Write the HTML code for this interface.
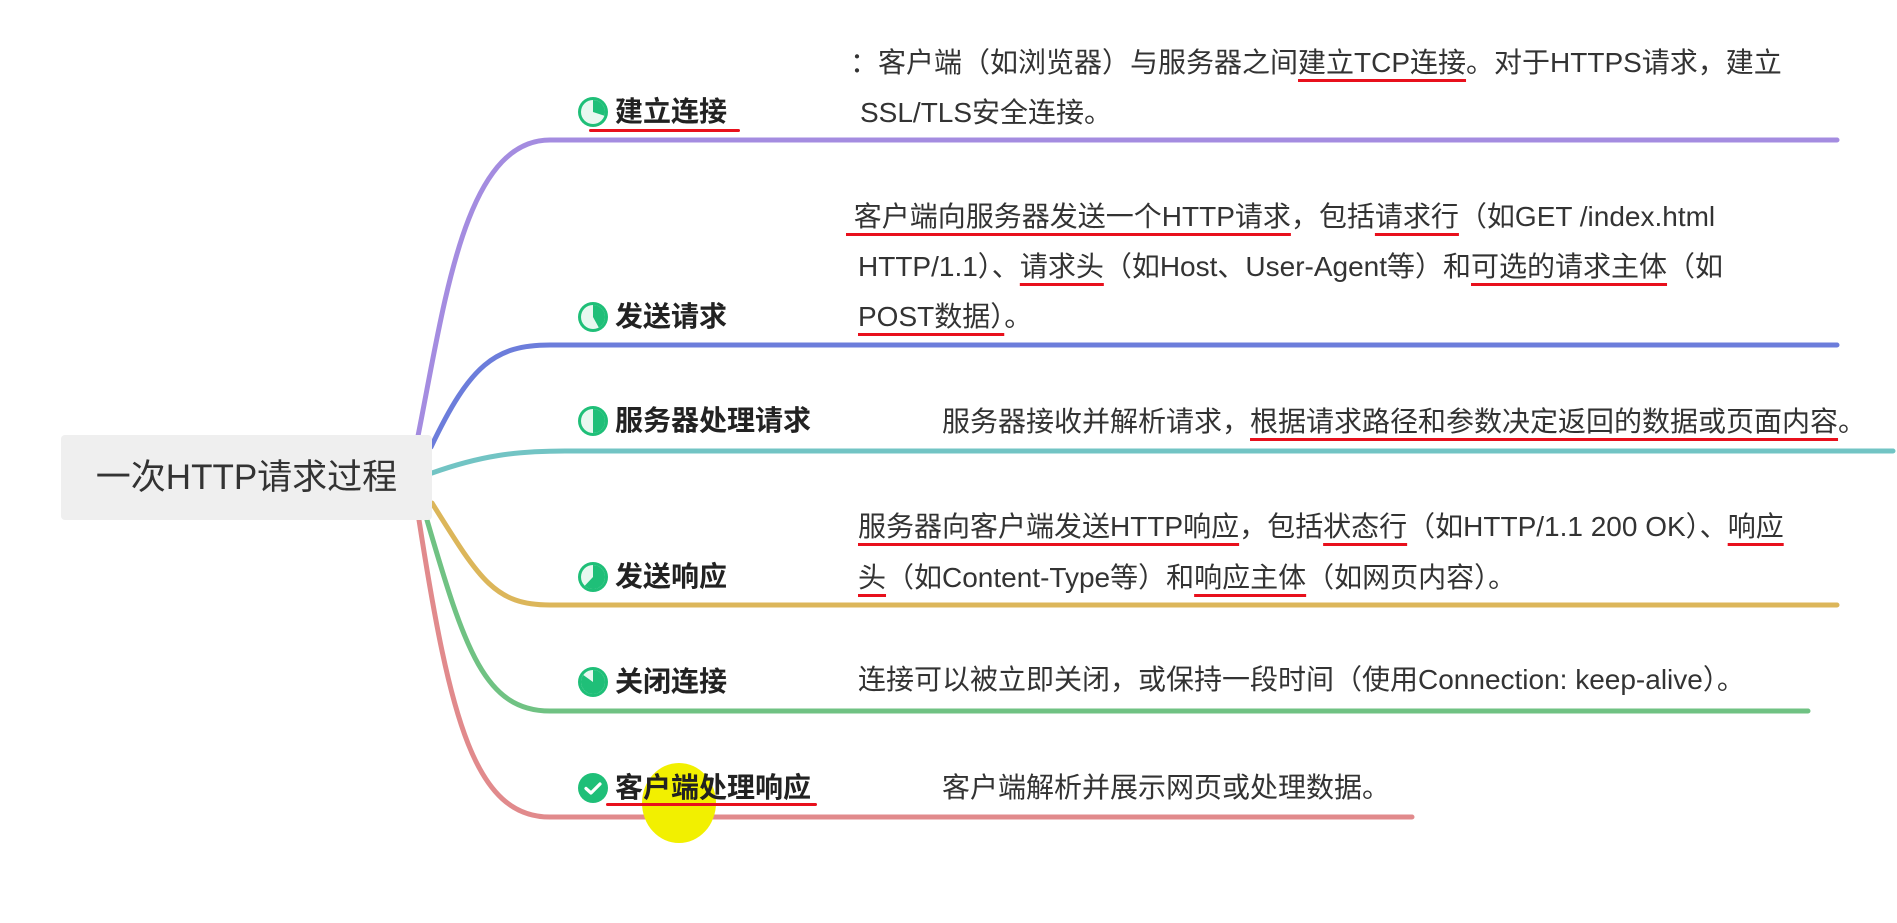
<!DOCTYPE html>
<html><head><meta charset="utf-8"><style>
html,body{margin:0;padding:0;background:#fff;}
body{width:1897px;height:923px;position:relative;overflow:hidden;font-family:"Liberation Sans","Noto Sans CJK SC",sans-serif;}
.root{position:absolute;left:61px;top:435px;width:371px;height:85px;background:#efefef;border-radius:4px;font-size:35px;color:#333;line-height:85px;text-align:center;}
.lab{position:absolute;left:615px;font-size:28px;font-weight:bold;color:#222;line-height:32px;white-space:nowrap;}
.ic{position:absolute;left:577px;width:32px;height:32px;}
.t{position:absolute;font-size:28px;color:#333;line-height:32px;white-space:nowrap;}
.t u{text-decoration:underline;text-decoration-color:#e8101c;text-decoration-thickness:3px;text-underline-offset:7px;}
.u{position:absolute;height:3px;background:#e8101c;border-radius:2px;}
</style></head><body>
<svg width="1897" height="923" style="position:absolute;left:0;top:0" fill="none" stroke-width="5" stroke-linecap="round">
<path d="M418,436 C445,300 465,140 550,140 L1837,140" stroke="#a48ce0"/>
<path d="M431,447 C470,365 495,345 550,345 L1837,345" stroke="#6c7ddb"/>
<path d="M432,473 C480,456 515,451 565,451 L1893,451" stroke="#72c4c4"/>
<path d="M432,503 C480,580 495,605 550,605 L1837,605" stroke="#dcb65a"/>
<path d="M427,520 C465,650 485,711 550,711 L1808,711" stroke="#70c283"/>
<path d="M419,520 C450,720 475,817 550,817 L1412,817" stroke="#e18a8c"/>
</svg>
<div class="root">一次HTTP请求过程</div>

<svg class="ic" style="top:96px" viewBox="0 0 32 32"><circle cx="16" cy="16" r="15" fill="#1fbf78"/><circle cx="16" cy="16" r="12" fill="#e9f8f0"/><path d="M16,16 L16,4 A12,12 0 0 1 27.41,19.71Z" fill="#1fbf78"/></svg>
<div class="lab" style="top:96px">建立连接</div>
<div class="u" style="left:589px;top:129px;width:151px"></div>
<svg class="ic" style="top:301px" viewBox="0 0 32 32"><circle cx="16" cy="16" r="15" fill="#1fbf78"/><circle cx="16" cy="16" r="12" fill="#e9f8f0"/><path d="M16,16 L16,4 A12,12 0 0 1 21.78,26.51Z" fill="#1fbf78"/></svg>
<div class="lab" style="top:301px">发送请求</div>
<svg class="ic" style="top:405px" viewBox="0 0 32 32"><circle cx="16" cy="16" r="15" fill="#1fbf78"/><circle cx="16" cy="16" r="12" fill="#e9f8f0"/><path d="M16,16 L16,4 A12,12 0 0 1 16,28Z" fill="#1fbf78"/></svg>
<div class="lab" style="top:405px">服务器处理请求</div>
<svg class="ic" style="top:561px" viewBox="0 0 32 32"><circle cx="16" cy="16" r="15" fill="#1fbf78"/><circle cx="16" cy="16" r="12" fill="#e9f8f0"/><path d="M16,16 L16,4 A12,12 0 1 1 7.78,24.75Z" fill="#1fbf78"/></svg>
<div class="lab" style="top:561px">发送响应</div>
<svg class="ic" style="top:666px" viewBox="0 0 32 32"><circle cx="16" cy="16" r="15" fill="#1fbf78"/><circle cx="16" cy="16" r="12" fill="#e9f8f0"/><path d="M16,16 L16,4 A12,12 0 1 1 6.29,8.94Z" fill="#1fbf78"/></svg>
<div class="lab" style="top:666px">关闭连接</div>
<div style="position:absolute;left:642px;top:763px;width:74px;height:80px;border-radius:50%;background:#f2f000;"></div>
<svg class="ic" style="top:772px" viewBox="0 0 32 32"><circle cx="16" cy="16" r="15" fill="#1fbf78"/><path d="M9,16.5 L14,21 L23,12" stroke="#fff" stroke-width="3.2" fill="none" stroke-linecap="round" stroke-linejoin="round"/></svg>
<div class="lab" style="top:772px">客户端处理响应</div>
<div class="u" style="left:606px;top:803px;width:211px"></div>

<div class="t" style="left:850px;top:47px">：客户端（如浏览器）与服务器之间<u>建立TCP连接</u>。对于HTTPS请求，建立</div>
<div class="t" style="left:860px;top:97px">SSL/TLS安全连接。</div>
<div class="t" style="left:846px;top:201px"><u>&nbsp;客户端向服务器发送一个HTTP请求</u>，包括<u>请求行</u>（如GET /index.html</div>
<div class="t" style="left:858px;top:251px">HTTP/1.1）、<u>请求头</u>（如Host、User-Agent等）和<u>可选的请求主体</u>（如</div>
<div class="t" style="left:858px;top:301px"><u>POST数据）</u>。</div>
<div class="t" style="left:942px;top:406px">服务器接收并解析请求，<u>根据请求路径和参数决定返回的数据或页面内容</u>。</div>
<div class="t" style="left:858px;top:511px"><u>服务器向客户端发送HTTP响应</u>，包括<u>状态行</u>（如HTTP/1.1 200 OK）、<u>响应</u></div>
<div class="t" style="left:858px;top:562px"><u>头</u>（如Content-Type等）和<u>响应主体</u>（如网页内容）。</div>
<div class="t" style="left:858px;top:664px">连接可以被立即关闭，或保持一段时间（使用Connection: keep-alive）。</div>
<div class="t" style="left:942px;top:772px">客户端解析并展示网页或处理数据。</div>
</body></html>
